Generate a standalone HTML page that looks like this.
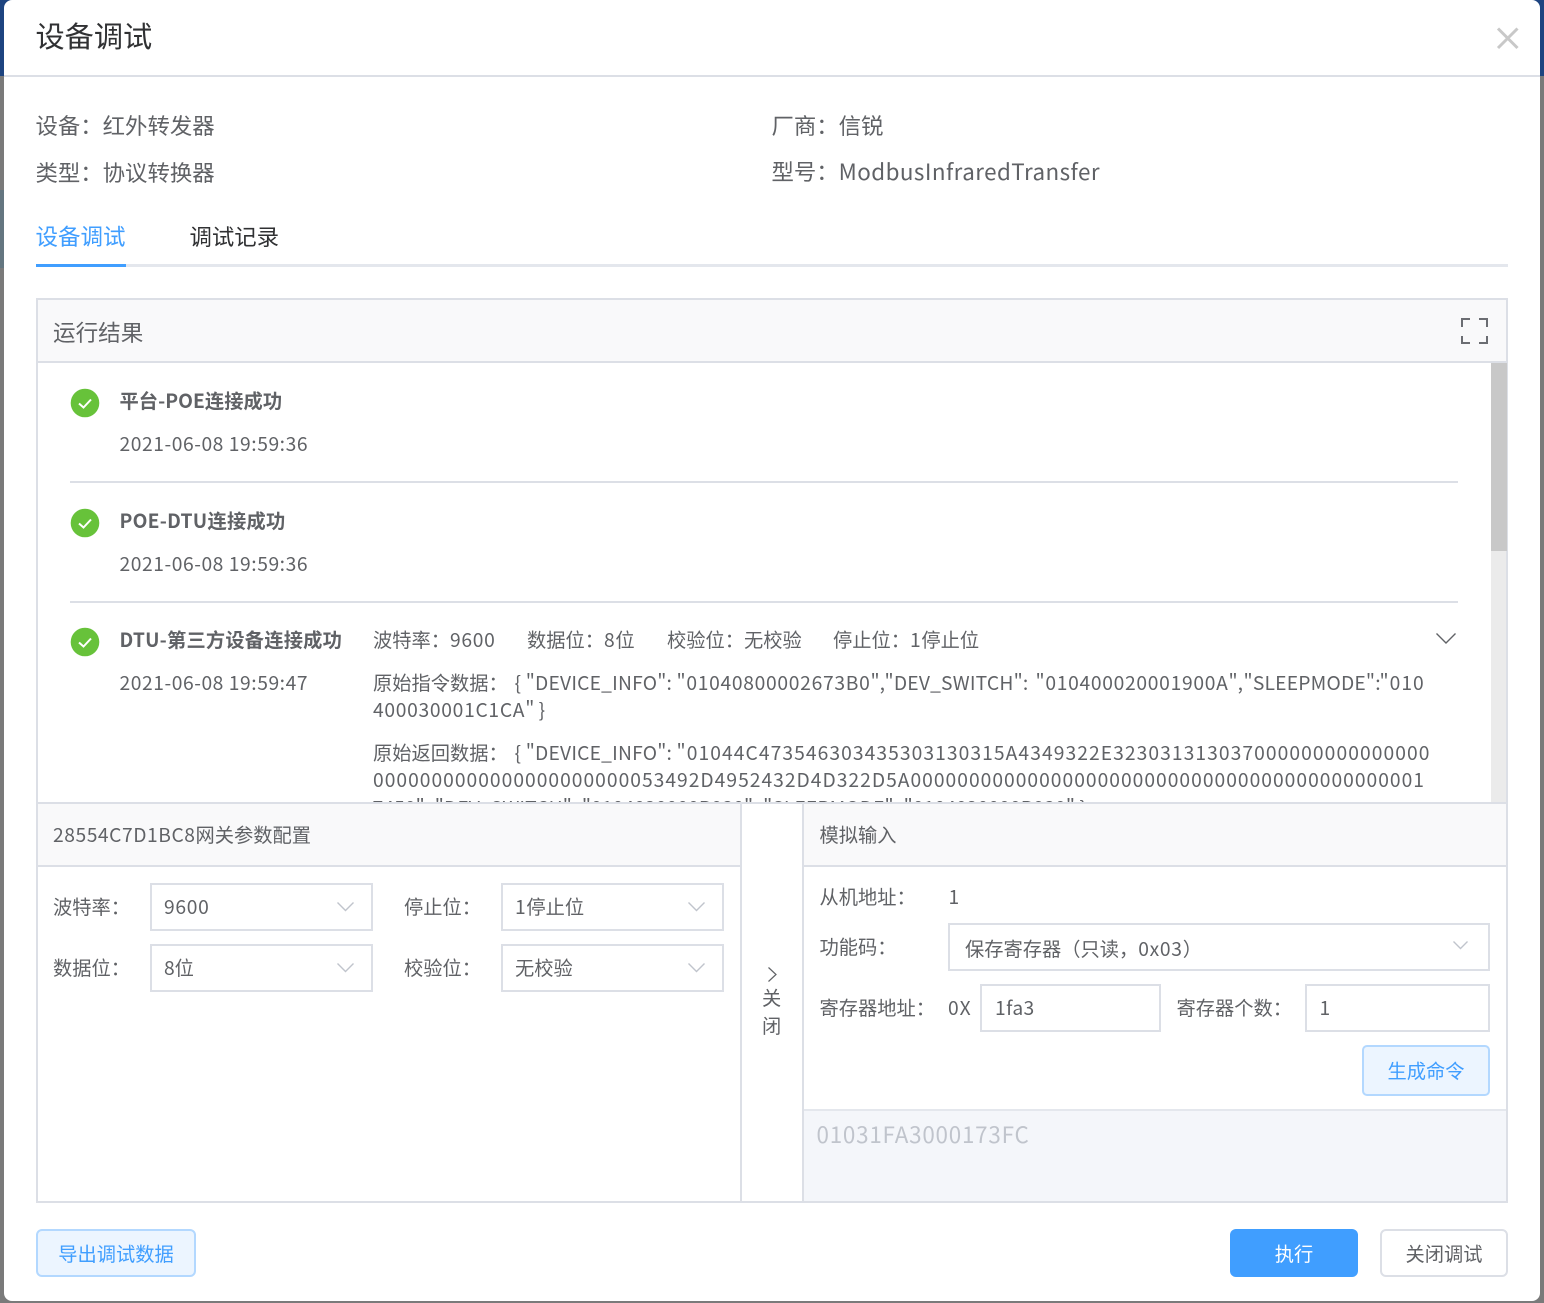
<!DOCTYPE html>
<html lang="zh"><head><meta charset="utf-8"><title>设备调试</title>
<style>
html,body{margin:0;padding:0;width:1544px;height:1303px;overflow:hidden;background:#7a7a7a}
*{box-sizing:border-box}
body{position:relative;font-family:"Noto Sans CJK SC","Liberation Sans",sans-serif;font-size:19.25px;color:#606266}
.a{position:absolute}
.t{position:absolute;white-space:nowrap;height:28px;line-height:28px;margin-top:-1px;margin-left:-.5px}
.l{position:absolute;background:#dcdfe6}
.b{position:absolute;border:2px solid #dcdfe6;background:#fff}
svg{position:absolute;overflow:visible}
.ck{width:30px;height:30px;left:70px}
.ch{fill:none;stroke:#c0c4cc;stroke-width:1.4}
.n{letter-spacing:.7px}
.d{letter-spacing:.56px}
.m{letter-spacing:.7px}
.h{font-weight:700;letter-spacing:.15px}
</style></head><body>
<div class="a" style="left:0;top:0;width:1544px;height:76px;background:#1d4480"></div>
<div class="a" style="left:0;top:190px;width:4px;height:78px;background:#647680"></div>
<div class="a" style="left:4px;top:0;width:1536px;height:1301px;background:#fff;border-radius:8px"></div>
<div class="l" style="left:4px;top:75px;width:1536px;height:2px"></div>

<div class="t" style="left:36px;top:16px;height:40px;line-height:40px;font-size:29.2px;color:#303133">设备调试</div>
<svg style="left:1497px;top:28px;width:22px;height:20px"><path d="M1 0.5 20.500 20M20.500 0.500 1 20" stroke="#c8c8c8" stroke-width="3" fill="none"/></svg>

<div class="t" style="left:36px;top:112px;font-size:22.4px">设备：红外转发器</div>
<div class="t" style="left:36px;top:159px;font-size:22.4px">类型：协议转换器</div>
<div class="t" style="left:772px;top:112px;font-size:22.4px">厂商：信锐</div>
<div class="t" style="left:772px;top:158px;font-size:22.4px">型号：<span style="letter-spacing:.44px">ModbusInfraredTransfer</span></div>

<div class="t" style="left:36px;top:223px;font-size:22.5px;color:#409eff">设备调试</div>
<div class="t" style="left:190px;top:223px;font-size:22.4px;color:#303133">调试记录</div>
<div class="l" style="left:36px;top:264px;width:1472px;height:3px;background:#e4e7ed"></div>
<div class="a" style="left:36px;top:264px;width:90px;height:3px;background:#409eff"></div>

<div class="b" style="left:36px;top:298px;width:1472px;height:905px;background:#fff"></div>
<div class="a" style="left:38px;top:300px;width:1468px;height:61px;background:#f9f9fa"></div>
<div class="l" style="left:38px;top:361px;width:1468px;height:2px"></div>
<div class="t" style="left:53.500px;top:319px;font-size:22.6px">运行结果</div>
<svg style="left:1461px;top:318px;width:27px;height:26px"><path d="M9 1H1V9M18 1H26V9M1 18V25H9M26 18V25H18" fill="none" stroke="#6b6d72" stroke-width="2"/></svg>

<div class="a" style="left:1491px;top:363px;width:15px;height:439px;background:#ebebeb"></div>
<div class="a" style="left:1491px;top:363px;width:16px;height:188px;background:#c8c8c8"></div>

<svg class="ck" style="top:388px" viewBox="0 0 30 30"><circle cx="15" cy="15" r="14.300" fill="#67c23a"/><path d="M9 15.500 13.500 19.500 21 11.500" stroke="#fff" stroke-width="2" fill="none"/></svg>
<div class="t h" style="left:120px;top:387px;letter-spacing:.05px">平台-POE连接成功</div>
<div class="t d" style="left:120px;top:430px">2021-06-08 19:59:36</div>
<div class="l" style="left:70px;top:481px;width:1388px;height:2px"></div>

<svg class="ck" style="top:508px" viewBox="0 0 30 30"><circle cx="15" cy="15" r="14.300" fill="#67c23a"/><path d="M9 15.500 13.500 19.500 21 11.500" stroke="#fff" stroke-width="2" fill="none"/></svg>
<div class="t h" style="left:120px;top:507px;letter-spacing:.25px">POE-DTU连接成功</div>
<div class="t d" style="left:120px;top:550px">2021-06-08 19:59:36</div>
<div class="l" style="left:70px;top:601px;width:1388px;height:2px"></div>

<svg class="ck" style="top:627px" viewBox="0 0 30 30"><circle cx="15" cy="15" r="14.300" fill="#67c23a"/><path d="M9 15.500 13.500 19.500 21 11.500" stroke="#fff" stroke-width="2" fill="none"/></svg>
<div class="t h" style="left:120px;top:626px;letter-spacing:.2px">DTU-第三方设备连接成功</div>
<div class="t d" style="left:120px;top:669px">2021-06-08 19:59:47</div>
<div class="t" style="left:373.500px;top:626px">波特率：<span class="m">9600</span></div>
<div class="t" style="left:527.500px;top:626px">数据位：<span class="m">8</span>位</div>
<div class="t" style="left:667.500px;top:626px">校验位：无校验</div>
<div class="t" style="left:833.500px;top:626px">停止位：<span class="m">1</span>停止位</div>
<svg style="left:1436px;top:633px;width:20px;height:12px"><path d="M0.500 0.500 10 10 19.500 0.500" fill="none" stroke="#606266" stroke-width="1.400"/></svg>

<div class="t" style="left:373.500px;top:669px">原始指令数据：</div>
<div class="t" style="left:515px;top:669px;letter-spacing:.2px">{ "DEVICE_INFO":</div>
<div class="t" style="left:677px;top:669px"><span class="n">"01040800002673B0</span>",</div>
<div class="t" style="left:885px;top:669px;letter-spacing:.2px">"DEV_SWITCH":</div>
<div class="t" style="left:1036px;top:669px"><span class="n">"010400020001900A</span>",</div>
<div class="t" style="left:1244px;top:669px;letter-spacing:.2px">"SLEEPMODE":</div>
<div class="t" style="left:1380px;top:669px"><span style="letter-spacing:1px">"010</span></div>
<div class="t" style="left:373.500px;top:696px"><span style="letter-spacing:.7px">400030001C1CA</span>" }</div>

<div class="t" style="left:373.500px;top:739px">原始返回数据：</div>
<div class="t" style="left:515px;top:739px;letter-spacing:.2px">{ "DEVICE_INFO":</div>
<div class="t" style="left:677px;top:739px"><span style="letter-spacing:1.07px">"01044C473546303435303130315A4349322E323031313037000000000000000</span></div>
<div class="t" style="left:373.500px;top:766px;letter-spacing:1.01px">0000000000000000000000053492D4952432D4D322D5A00000000000000000000000000000000000000000001</div>
<div class="a" style="left:373px;top:796px;width:1100px;height:6px;overflow:hidden"><div class="t" style="left:0;top:-2px;letter-spacing:.1px">7450", "DEV_SWITCH": "0104020000B930", "SLEEPMODE": "0104020000B930" }</div></div>

<div class="a" style="left:38px;top:802px;width:1468px;height:399px;background:#fff"></div>
<div class="l" style="left:38px;top:802px;width:1468px;height:2px"></div>
<div class="a" style="left:38px;top:804px;width:702px;height:61px;background:#f9f9fa"></div>
<div class="a" style="left:804px;top:804px;width:702px;height:61px;background:#f9f9fa"></div>
<div class="l" style="left:38px;top:865px;width:702px;height:2px"></div>
<div class="l" style="left:804px;top:865px;width:702px;height:2px"></div>
<div class="l" style="left:740px;top:802px;width:2px;height:399px"></div>
<div class="l" style="left:802px;top:802px;width:2px;height:399px"></div>

<div class="t" style="left:53.500px;top:821px"><span style="letter-spacing:.55px">28554C7D1BC8</span>网关参数配置</div>
<div class="t" style="left:820px;top:821px">模拟输入</div>

<div class="t" style="left:53.500px;top:893px">波特率：</div>
<div class="b" style="left:150px;top:883px;width:223px;height:48px"></div>
<div class="t m" style="left:164.500px;top:893px">9600</div>
<svg style="left:337px;top:902px;width:18px;height:10px"><path class="ch" d="M0.500 0.500 8.500 8.500 16.500 0.500"/></svg>
<div class="t" style="left:404.500px;top:893px">停止位：</div>
<div class="b" style="left:501px;top:883px;width:223px;height:48px"></div>
<div class="t" style="left:515.500px;top:893px"><span class="m">1</span>停止位</div>
<svg style="left:688px;top:902px;width:18px;height:10px"><path class="ch" d="M0.500 0.500 8.500 8.500 16.500 0.500"/></svg>
<div class="t" style="left:53.500px;top:954px">数据位：</div>
<div class="b" style="left:150px;top:944px;width:223px;height:48px"></div>
<div class="t" style="left:164.500px;top:954px">8位</div>
<svg style="left:337px;top:963px;width:18px;height:10px"><path class="ch" d="M0.500 0.500 8.500 8.500 16.500 0.500"/></svg>
<div class="t" style="left:404.500px;top:954px">校验位：</div>
<div class="b" style="left:501px;top:944px;width:223px;height:48px"></div>
<div class="t" style="left:515.500px;top:954px">无校验</div>
<svg style="left:688px;top:963px;width:18px;height:10px"><path class="ch" d="M0.500 0.500 8.500 8.500 16.500 0.500"/></svg>

<svg style="left:768px;top:967px;width:10px;height:16px"><path d="M0.500 0.500 8 7.500 0.500 14.500" fill="none" stroke="#606266" stroke-width="1.200"/></svg>
<div class="t" style="left:762.500px;top:984px">关</div>
<div class="t" style="left:762.500px;top:1012px">闭</div>

<div class="t" style="left:820px;top:883px">从机地址：</div>
<div class="t" style="left:949px;top:883px">1</div>
<div class="t" style="left:820px;top:933px">功能码：</div>
<div class="b" style="left:948px;top:923px;width:542px;height:48px"></div>
<div class="t" style="left:965.500px;top:935px">保存寄存器（只读，<span class="m">0x03</span>）</div>
<svg style="left:1453px;top:941px;width:16px;height:10px"><path class="ch" d="M0.500 0.500 7.500 7.500 14.500 0.500"/></svg>
<div class="t" style="left:820px;top:994px">寄存器地址：</div>
<div class="t" style="left:948.500px;top:994px;letter-spacing:1px">0X</div>
<div class="b" style="left:980px;top:984px;width:181px;height:48px"></div>
<div class="t" style="left:995.500px;top:994px;letter-spacing:.4px">1fa3</div>
<div class="t" style="left:1177px;top:994px">寄存器个数：</div>
<div class="b" style="left:1305px;top:984px;width:185px;height:48px"></div>
<div class="t" style="left:1320px;top:994px">1</div>
<div class="a" style="left:1362px;top:1045px;width:128px;height:51px;border:2px solid #b3d8ff;border-radius:5px;background:#ecf5ff;color:#409eff;text-align:center;line-height:47px">生成命令</div>
<div class="a" style="left:804px;top:1109px;width:702px;height:92px;background:#f4f6fa;border-top:2px solid #e4e7ed"></div>
<div class="t" style="left:817px;top:1120px;font-size:22.4px;height:30px;line-height:30px;color:#c0c4cc;letter-spacing:.78px">01031FA3000173FC</div>

<div class="a" style="left:36px;top:1229px;width:160px;height:48px;border:2px solid #b3d8ff;border-radius:6px;background:#ecf5ff;color:#409eff;text-align:center;line-height:44px">导出调试数据</div>
<div class="a" style="left:1230px;top:1229px;width:128px;height:48px;border-radius:6px;background:#409eff;color:#fff;text-align:center;line-height:48px">执行</div>
<div class="a" style="left:1380px;top:1229px;width:128px;height:48px;border:2px solid #dcdfe6;border-radius:6px;background:#fff;text-align:center;line-height:44px">关闭调试</div>
</body></html>
